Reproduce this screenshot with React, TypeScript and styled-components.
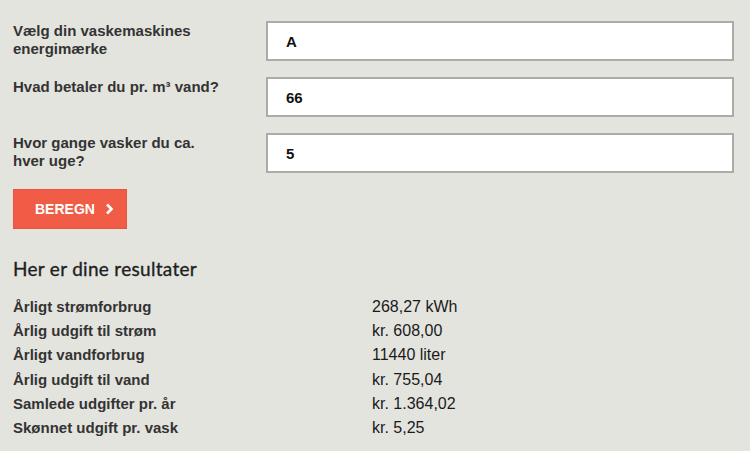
import styled, { createGlobalStyle } from "styled-components";

const GlobalStyle = createGlobalStyle`
    body {
        margin: 0;
        background-color: #e4e4df;
        font-family: "Liberation Sans", Arial, sans-serif;
        color: #333;
    }
`;

const Page = styled.div`
    padding: 21px 16px 0 13px;
`;

const FormRow = styled.div`
    display: grid;
    grid-template-columns: 253px 1fr;
    align-items: start;
    margin-bottom: 16px;
`;

const Label = styled.label`
    max-width: 215px;
    font-size: 15px;
    font-weight: bold;
    line-height: 18px;
    padding-top: 1px;
    color: #333;
`;

const Input = styled.input`
    box-sizing: border-box;
    height: 40px;
    width: 100%;
    border: 2px solid #abaca7;
    background: #fff;
    padding: 0 18px;
    font-family: "Liberation Sans", Arial, sans-serif;
    font-size: 15px;
    font-weight: bold;
    color: #111;
    outline: none;
`;

const Button = styled.button`
    display: flex;
    align-items: center;
    gap: 10px;
    height: 40px;
    width: 114px;
    padding: 0 0 0 21px;
    border: 1px solid #e8553f;
    background-color: #f05c45;
    color: #fff;
    font-family: "Liberation Sans", Arial, sans-serif;
    font-size: 14px;
    font-weight: bold;
    cursor: pointer;
`;

const Heading = styled.h3`
    margin: 28px 0 14px;
    font-family: Lato, "Open Sans", sans-serif;
    font-size: 19px;
    font-weight: 400;
    letter-spacing: 0.3px;
    -webkit-text-stroke: 0.35px #1f1f1f;
    line-height: 24px;
    color: #1f1f1f;
`;

const ResultRow = styled.div`
    display: grid;
    grid-template-columns: 359px 1fr;
    line-height: 24.2px;
    font-size: 15px;
`;

const ResultLabel = styled.span`
    font-weight: bold;
    color: #333;
`;

const ResultValue = styled.span`
    font-size: 16px;
    color: #1a1a1a;
`;

const fields = [
    { label: "Vælg din vaskemaskines energimærke", value: "A" },
    { label: "Hvad betaler du pr. m³ vand?", value: "66" },
    { label: "Hvor gange vasker du ca. hver uge?", value: "5" },
];

const results = [
    ["Årligt strømforbrug", "268,27 kWh"],
    ["Årlig udgift til strøm", "kr. 608,00"],
    ["Årligt vandforbrug", "11440 liter"],
    ["Årlig udgift til vand", "kr. 755,04"],
    ["Samlede udgifter pr. år", "kr. 1.364,02"],
    ["Skønnet udgift pr. vask", "kr. 5,25"],
];

const App = () => {
    return (
        <>
            <GlobalStyle />
            <Page>
                {fields.map((f, i) => (
                    <FormRow key={i}>
                        <Label>{f.label}</Label>
                        <Input defaultValue={f.value} />
                    </FormRow>
                ))}
                <Button>
                    BEREGN
                    <svg width="9" height="12" viewBox="0 0 9 12">
                        <path
                            d="M2 1.5 L6.5 6 L2 10.5"
                            fill="none"
                            stroke="#fff"
                            strokeWidth="2.6"
                        />
                    </svg>
                </Button>
                <Heading>Her er dine resultater</Heading>
                {results.map(([label, value]) => (
                    <ResultRow key={label}>
                        <ResultLabel>{label}</ResultLabel>
                        <ResultValue>{value}</ResultValue>
                    </ResultRow>
                ))}
            </Page>
        </>
    );
};

export default App;
